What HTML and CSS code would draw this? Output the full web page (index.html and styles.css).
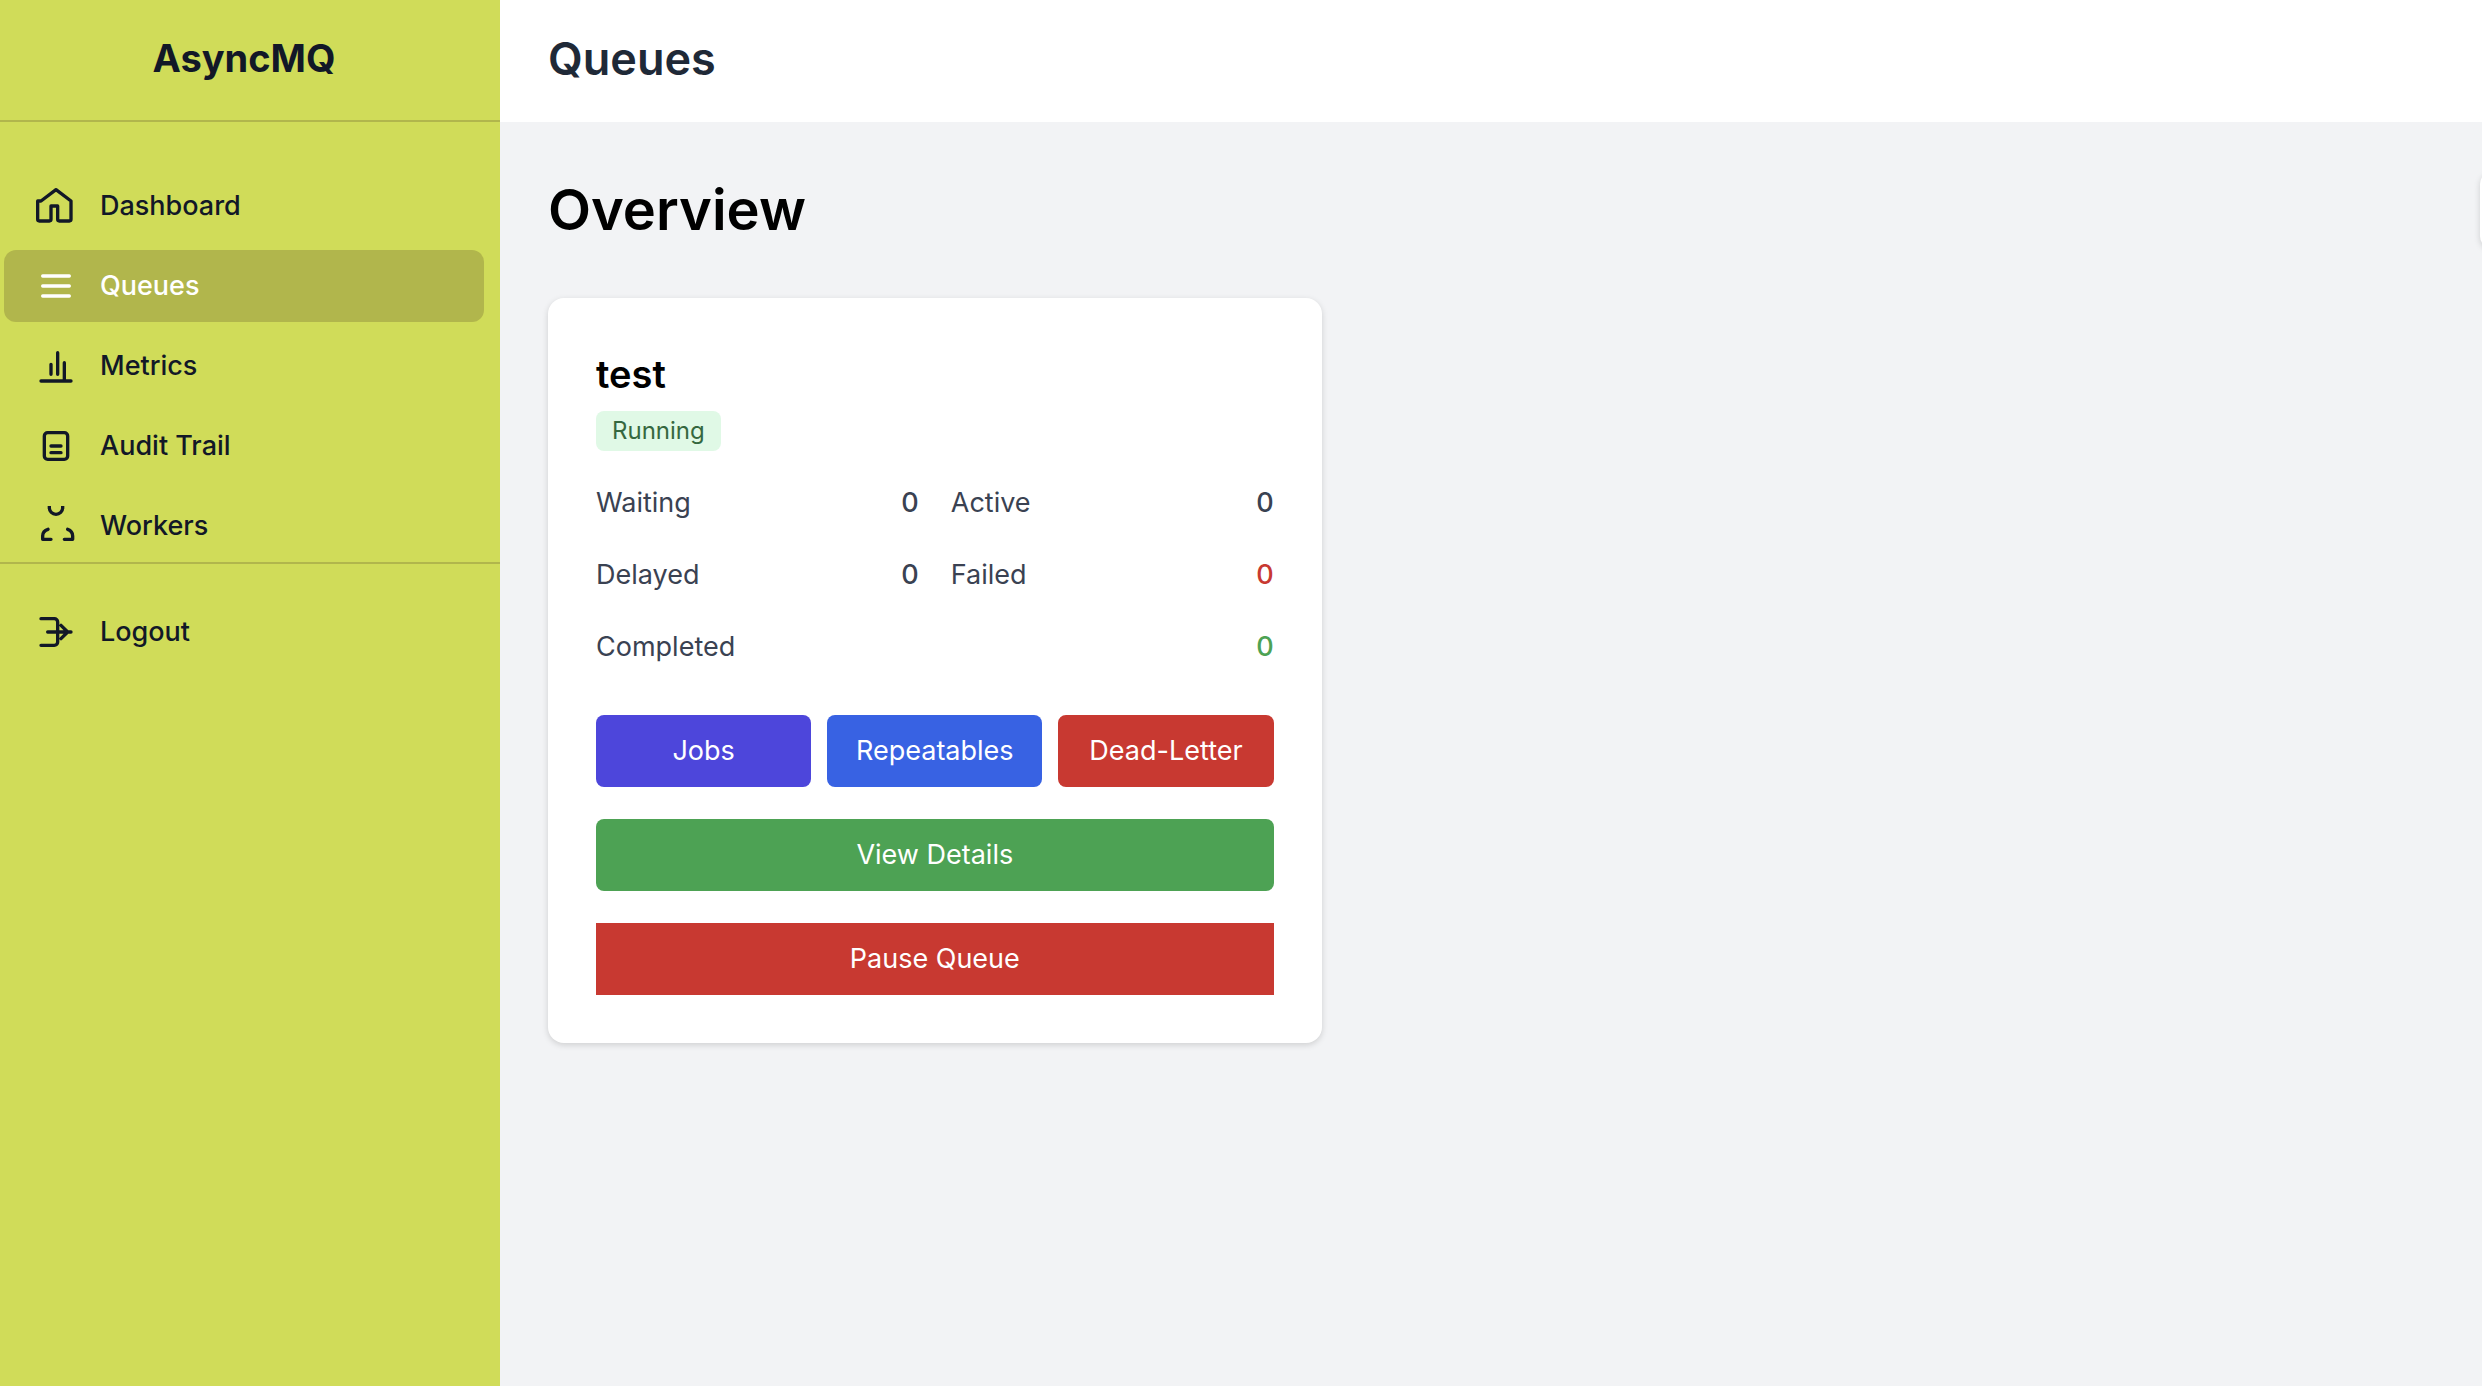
FILE: index.html
```html
<!DOCTYPE html>
<html lang="en">
<head>
  <meta charset="UTF-8">
  <meta name="viewport" content="width=device-width, initial-scale=1.0">
  <title>Queues</title>
  <link rel="stylesheet" href="styles.css">
</head>
<body>
  <aside class="sidebar">
    <div class="brand">AsyncMQ</div>
    <nav class="nav">
      <a href="#" class="nav-link">
        <svg class="icon" viewBox="0 0 24 24"><path d="M3 9l9-6.8L21 9v11a1 1 0 0 1-1 1h-6a1 1 0 0 1-1-1v-8H9v8a1 1 0 0 1-1 1H2a1 1 0 0 1-1-1V9z"/></svg>
        Dashboard
      </a>
      <a href="#" class="nav-link active">
        <svg class="icon" viewBox="0 0 24 24"><path d="M4 6h16M4 12h16M4 18h16"/></svg>
        Queues
      </a>
      <a href="#" class="nav-link">
        <svg class="icon" viewBox="0 0 24 24"><path d="M9 11v6M13 4v13M17 10v11M3 21h18"/></svg>
        Metrics
      </a>
      <a href="#" class="nav-link">
        <svg class="icon" viewBox="0 0 24 24"><path d="M9 12h6M9 16h6M7 4h10a2 2 0 0 1 2 2v12a2 2 0 0 1-2 2H7a2 2 0 0 1-2-2V6a2 2 0 0 1 2-2z"/></svg>
        Audit Trail
      </a>
      <a href="#" class="nav-link">
        <svg class="icon" viewBox="0 0 24 24"><path d="M8 -1v2a4 4 0 0 0 8 0v-2M7.200 14C5 14.700 4 16.200 4 18v2h5M19 14c2 .7 3 2.200 3 4v2h-5"/></svg>
        Workers
      </a>
    </nav>
    <div class="nav-footer">
      <a href="#" class="nav-link">
        <svg class="icon" viewBox="0 0 24 24"><path d="M7 12h14M15 8l4 4-4 4M3 4h8a2 2 0 0 1 2 2v12a2 2 0 0 1-2 2H3"/></svg>
        Logout
      </a>
    </div>
  </aside>

  <div class="page">
    <header class="topbar">
      <h1>Queues</h1>
    </header>
    <main class="content">
      <div class="title-row">
        <h2>Overview</h2>
        <button type="button" class="side-button"></button>
      </div>

      <section class="card">
        <h3>test</h3>
        <span class="badge">Running</span>
        <dl class="stats">
          <div class="stat"><dt>Waiting</dt><dd>0</dd></div>
          <div class="stat"><dt>Active</dt><dd>0</dd></div>
          <div class="stat"><dt>Delayed</dt><dd>0</dd></div>
          <div class="stat"><dt>Failed</dt><dd class="failed">0</dd></div>
          <div class="stat wide"><dt>Completed</dt><dd class="completed">0</dd></div>
        </dl>
        <div class="actions">
          <a href="#" class="btn indigo">Jobs</a>
          <a href="#" class="btn blue">Repeatables</a>
          <a href="#" class="btn red">Dead-Letter</a>
        </div>
        <a href="#" class="btn green">View Details</a>
        <button type="button" class="btn red square">Pause Queue</button>
      </section>
    </main>
  </div>
</body>
</html>
```
FILE: styles.css
```css
* {
  box-sizing: border-box;
}
body {
  margin: 0;
  display: flex;
  min-height: 100vh;
  background: #f2f3f5;
  font-family: Inter, "Liberation Sans", sans-serif;
  font-size: 27px;
  line-height: 40px;
  color: #000;
}
h1, h2, h3, dl, dd {
  margin: 0;
}
a {
  text-decoration: none;
}

/* sidebar */
.sidebar {
  flex: none;
  width: 500px;
  background: #d0dc59;
  color: #121827;
}
.brand {
  height: 122px;
  padding-right: 12px;
  border-bottom: 2px solid #b1b64c;
  font-size: 38px;
  font-weight: 700;
  line-height: 116px;
  text-align: center;
}
.nav {
  display: flex;
  flex-direction: column;
  gap: 8px;
  padding: 48px 16px 0 4px;
}
.nav-footer {
  padding: 32px 16px 32px 4px;
  border-top: 2px solid #b1b64c;
}
.nav-link {
  display: flex;
  align-items: center;
  gap: 24px;
  padding: 16px 32px;
  border-radius: 12px;
  color: #121827;
  font-weight: 500;
}
.nav-link.active {
  background: #b1b64c;
  color: #fff;
}
.icon {
  width: 40px;
  height: 40px;
  fill: none;
  stroke: currentColor;
  stroke-width: 2;
  stroke-linecap: round;
  stroke-linejoin: round;
}

/* main area */
.page {
  flex: 1;
  min-width: 0;
  overflow: hidden;
}
.topbar {
  height: 122px;
  padding: 0 48px;
  background: #fff;
}
.topbar h1 {
  font-size: 45px;
  font-weight: 600;
  line-height: 118px;
  color: #1f2937;
}
.content {
  padding: 48px 0 48px 48px;
}
.title-row {
  display: flex;
  align-items: center;
  justify-content: space-between;
  height: 80px;
  margin-bottom: 48px;
}
.title-row h2 {
  font-size: 56px;
  font-weight: 600;
  line-height: 80px;
}
.side-button {
  width: 160px;
  height: 76px;
  margin-right: -158px;
  border: none;
  border-radius: 12px;
  background: #fff;
  box-shadow: 0 2px 6px rgba(0, 0, 0, 0.15);
}

/* queue card */
.card {
  display: flex;
  flex-direction: column;
  width: 40%;
  padding: 48px;
  border-radius: 16px;
  background: #fff;
  box-shadow: 0 2px 6px rgba(0, 0, 0, 0.15);
}
.card h3 {
  margin-bottom: 9px;
  font-size: 38px;
  font-weight: 600;
  line-height: 56px;
}
.badge {
  align-self: flex-start;
  padding: 0 16px;
  border-radius: 8px;
  background: #e0f9e6;
  color: #35683f;
  font-size: 24px;
}
.stats {
  display: grid;
  grid-template-columns: 1fr 1fr;
  gap: 32px;
  margin: 32px 0 48px;
  color: #3a4252;
}
.stat {
  display: flex;
  justify-content: space-between;
}
.stat.wide {
  grid-column: span 2;
}
.stat dd {
  font-weight: 500;
}
.stat .failed {
  color: #c83931;
}
.stat .completed {
  color: #4da254;
}
.actions {
  display: grid;
  grid-template-columns: repeat(3, 1fr);
  gap: 16px;
}
.btn {
  display: block;
  padding: 16px 0;
  border: none;
  border-radius: 8px;
  color: #fff;
  font: inherit;
  text-align: center;
}
.card > .btn {
  margin-top: 32px;
}
.indigo {
  background: #4d46db;
}
.blue {
  background: #3862e3;
}
.red {
  background: #c83931;
}
.green {
  background: #4da254;
}
.square {
  border-radius: 0;
}
```
